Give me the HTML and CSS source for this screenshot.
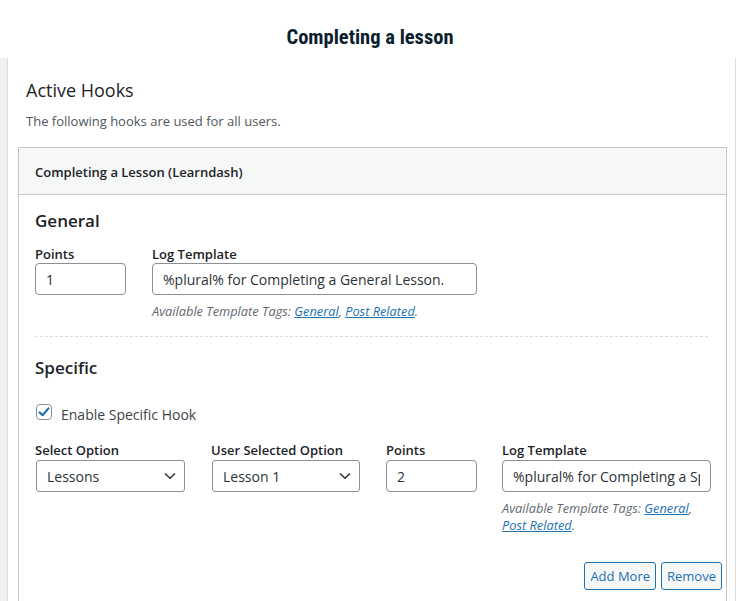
FILE: index.html
```html
<!DOCTYPE html>
<html lang="en">
<head>
<meta charset="utf-8">
<title>Completing a lesson</title>
<link rel="stylesheet" href="styles.css">
</head>
<body>
<header class="title">Completing a lesson</header>
<div class="frame">
  <div class="box">
    <h2 class="hooks-title">Active Hooks</h2>
    <p class="desc">The following hooks are used for all users.</p>
    <div class="panel">
      <div class="panel-head">Completing a Lesson (Learndash)</div>
      <div class="panel-body">
        <h3 class="section-title">General</h3>
        <div class="general-row">
          <div class="field">
            <div class="label">Points</div>
            <input class="text-input" type="text" value="1">
          </div>
          <div class="field">
            <div class="label">Log Template</div>
            <input class="text-input" type="text" value="%plural% for Completing a General Lesson.">
            <div class="tags">Available Template Tags: <a href="#">General</a>, <a href="#">Post Related</a>.</div>
          </div>
        </div>
        <div class="sep"></div>
        <h3 class="section-title specific">Specific</h3>
        <div class="check-row">
          <span class="checkbox">
            <svg width="14" height="14" viewBox="0 0 14 14"><path d="M2.6 7.4 L5.6 10.2 L11.4 3.4" fill="none" stroke="#2271b1" stroke-width="2.2" stroke-linecap="round" stroke-linejoin="round"/></svg>
          </span>
          <span class="check-label">Enable Specific Hook</span>
        </div>
        <div class="spec-row">
          <div class="field">
            <div class="label">Select Option</div>
            <div class="select"><span>Lessons</span>
              <svg width="12" height="8" viewBox="0 0 12 8"><path d="M1 1.5 L6 6.2 L11 1.5" fill="none" stroke="#2c3338" stroke-width="1.5"/></svg>
            </div>
          </div>
          <div class="field">
            <div class="label">User Selected Option</div>
            <div class="select"><span>Lesson 1</span>
              <svg width="12" height="8" viewBox="0 0 12 8"><path d="M1 1.5 L6 6.2 L11 1.5" fill="none" stroke="#2c3338" stroke-width="1.5"/></svg>
            </div>
          </div>
          <div class="field">
            <div class="label">Points</div>
            <input class="text-input" type="text" value="2">
          </div>
          <div class="field">
            <div class="label">Log Template</div>
            <input class="text-input" type="text" value="%plural% for Completing a Specific Lesson.">
            <div class="tags">Available Template Tags: <a href="#">General</a>, <a href="#">Post Related</a>.</div>
          </div>
        </div>
        <div class="actions">
          <button class="btn">Add More</button>
          <button class="btn">Remove</button>
        </div>
      </div>
    </div>
  </div>
</div>
</body>
</html>
```
FILE: styles.css
```css
* { box-sizing: border-box; }
html, body { margin: 0; padding: 0; background: #fff; }
body {
  font-family: "Open Sans", "Noto Sans", sans-serif;
  color: #1d2327;
  overflow: hidden;
  height: 601px;
}
.title {
  height: 58px;
  padding-top: 26px;
  line-height: 22px;
  text-align: center;
  font-family: "Liberation Sans Narrow", "Roboto Condensed", Roboto, sans-serif;
  font-weight: 700;
  font-size: 20.5px;
  color: #0b1e2d;
}
.frame {
  border-left: 7px solid #f0f0f1;
  height: 700px;
}
.box {
  width: 729px;
  height: 100%;
  border-left: 1px solid #dcdcde;
  border-right: 1px solid #dcdcde;
  padding-top: 20px;
}
.hooks-title {
  margin: 0 0 0 18px;
  font-size: 18px;
  line-height: 24px;
  font-weight: 500;
  color: #1d2327;
}
.desc {
  margin: 10px 0 0 18px;
  font-size: 13px;
  line-height: 18px;
  color: #50575e;
}
.panel {
  margin: 17px 8px 0 10px;
  border: 1px solid #c3c4c7;
  height: 600px;
}
.panel-head {
  background: #f6f7f7;
  border-bottom: 1px solid #c3c4c7;
  padding: 14px 16px 12px;
  font-size: 13px;
  line-height: 20px;
  font-weight: 600;
  color: #1d2327;
}
.panel-body {
  padding: 0 16px 20px 16px;
}
.section-title {
  margin: 14px 0 0;
  font-size: 17px;
  line-height: 24px;
  font-weight: 600;
  color: #1d2327;
}
.section-title.specific { margin-top: 19px; }
.general-row {
  display: grid;
  grid-template-columns: 91px 325px;
  column-gap: 26px;
  margin-top: 12px;
}
.field { display: flex; flex-direction: column; align-items: stretch; }
.label {
  font-size: 13px;
  line-height: 18px;
  font-weight: 600;
  color: #1d2327;
}
.text-input {
  height: 32px;
  margin: 0;
  padding: 0 10px;
  border: 1px solid #8c8f94;
  border-radius: 4px;
  font-family: inherit;
  font-size: 14px;
  color: #2c3338;
  background: #fff;
  width: 100%;
}
.tags {
  margin-top: 8px;
  font-size: 12.8px;
  line-height: 17px;
  font-style: italic;
  color: #646970;
}
.tags a { color: #2271b1; text-decoration: underline; }
.sep {
  margin-top: 16px;
  border-top: 1px dashed #dcdcde;
  margin-right: 2px;
}
.check-row {
  display: flex;
  align-items: flex-start;
  height: 20px;
  margin-top: 22px;
}
.checkbox {
  width: 16px;
  height: 16px;
  margin-top: 2px;
  border: 1px solid #8c8f94;
  border-radius: 4px;
  display: flex;
  align-items: center;
  justify-content: center;
  margin-left: 1px;
}
.check-label {
  margin-left: 9px;
  margin-top: 3px;
  font-size: 14px;
  line-height: 20px;
  color: #3c434a;
}
.spec-row {
  display: grid;
  grid-template-columns: 150px 149px 91px 208px;
  column-gap: 26px;
  margin-top: 19px;
}
.spec-row .label { margin-bottom: 1px; }
.spec-row .field:nth-child(4) { margin-left: -1px; }
.select {
  height: 32px;
  border: 1px solid #8c8f94;
  border-radius: 3px;
  padding: 0 8px 0 10px;
  display: flex;
  align-items: center;
  justify-content: space-between;
  font-size: 14px;
  color: #2c3338;
  margin-left: 1px;
}
.actions {
  display: flex;
  justify-content: flex-end;
  gap: 5px;
  margin-top: 28px;
  margin-right: -12px;
}
.btn {
  height: 28px;
  padding: 0 5px;
  border: 1px solid #2271b1;
  border-radius: 3px;
  background: #f6f7f7;
  color: #2271b1;
  font-family: inherit;
  font-size: 13px;
  line-height: 26px;
}
```
